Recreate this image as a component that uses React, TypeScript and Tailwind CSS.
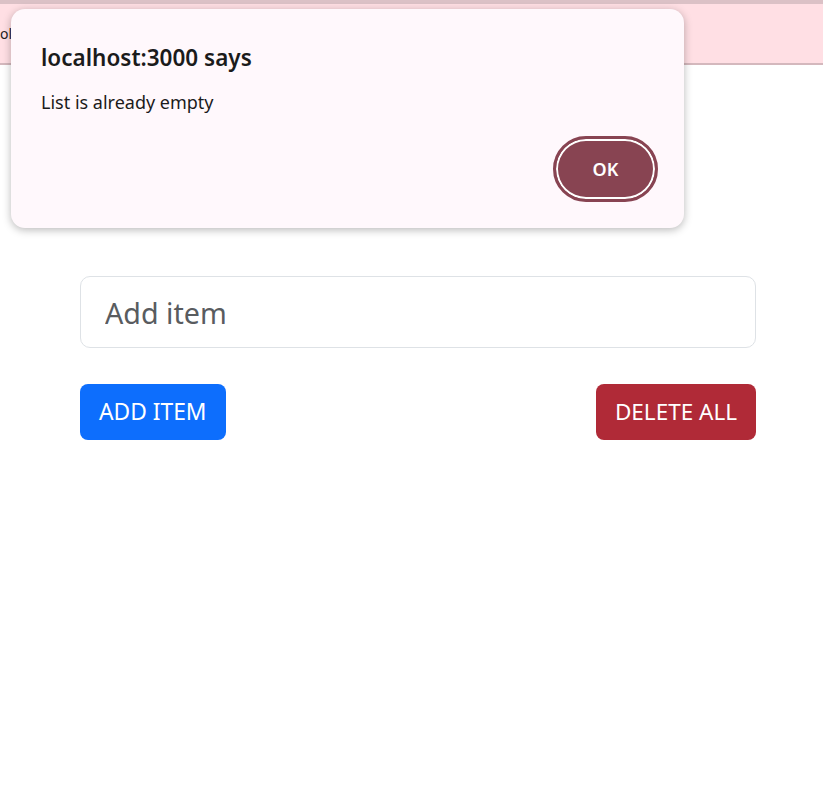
import { useState } from 'react'

function AlertDialog({ message, onClose }: { message: string; onClose: () => void }) {
  return (
    <div className="absolute left-[11px] top-[9px] w-[673px] h-[219px] rounded-[14px] bg-[#fff8fc] shadow-[0_2px_8px_rgba(0,0,0,0.28)] px-[30px] pt-[34px]">
      <h2 className="text-[22.5px] leading-[30px] font-semibold text-[#1b1b1b]">localhost:3000 says</h2>
      <p className="mt-[16px] text-[18px] leading-[26px] text-[#1b1b1b]">{message}</p>
      <div className="flex justify-end mt-[21px]">
        <button
          onClick={onClose}
          className="-mr-[4px] h-[66px] w-[105px] rounded-full bg-[#884452] border-[3px] border-[#884452] shadow-[inset_0_0_0_2px_#ffffff] text-white font-semibold text-[18px]"
        >
          OK
        </button>
      </div>
    </div>
  )
}

export default function App() {
  const [items, setItems] = useState<string[]>([])
  const [text, setText] = useState('')
  const [alertMsg, setAlertMsg] = useState<string | null>('List is already empty')

  const handleAdd = () => {
    if (!text.trim()) return
    setItems([...items, text.trim()])
    setText('')
  }

  const handleDeleteAll = () => {
    if (items.length === 0) {
      setAlertMsg('List is already empty')
      return
    }
    setItems([])
  }

  return (
    <div className="relative min-h-[802px] bg-white font-['Noto_Sans','Open_Sans',sans-serif]">
      <div className="h-[4px] bg-[#dbc1c6]" />
      <header className="h-[61px] bg-[#ffdfe4] border-b-2 border-[#d4b8bd] flex items-center">
        <span className="text-[14px] text-[#222]">ol</span>
      </header>

      <main className="pl-[80px] pr-[67px] pt-[211px]">
        <input
          value={text}
          onChange={(e) => setText(e.target.value)}
          placeholder="Add item"
          className="w-full h-[72px] rounded-[10px] border border-[#dee2e6] px-[24px] text-[28.7px] text-[#212529] placeholder:text-[#595c5f] outline-none"
        />
        <div className="flex justify-between mt-[36px]">
          <button
            onClick={handleAdd}
            className="h-[56px] px-[19px] rounded-[8px] bg-[#0d6efd] text-white text-[22.8px]"
          >
            ADD ITEM
          </button>
          <button
            onClick={handleDeleteAll}
            className="h-[56px] px-[19px] rounded-[8px] bg-[#b02a37] text-white text-[22.5px]"
          >
            DELETE ALL
          </button>
        </div>
        <ul className="mt-6">
          {items.map((item, i) => (
            <li key={i} className="text-[18px] py-1">{item}</li>
          ))}
        </ul>
      </main>

      {alertMsg && <AlertDialog message={alertMsg} onClose={() => setAlertMsg(null)} />}
    </div>
  )
}
